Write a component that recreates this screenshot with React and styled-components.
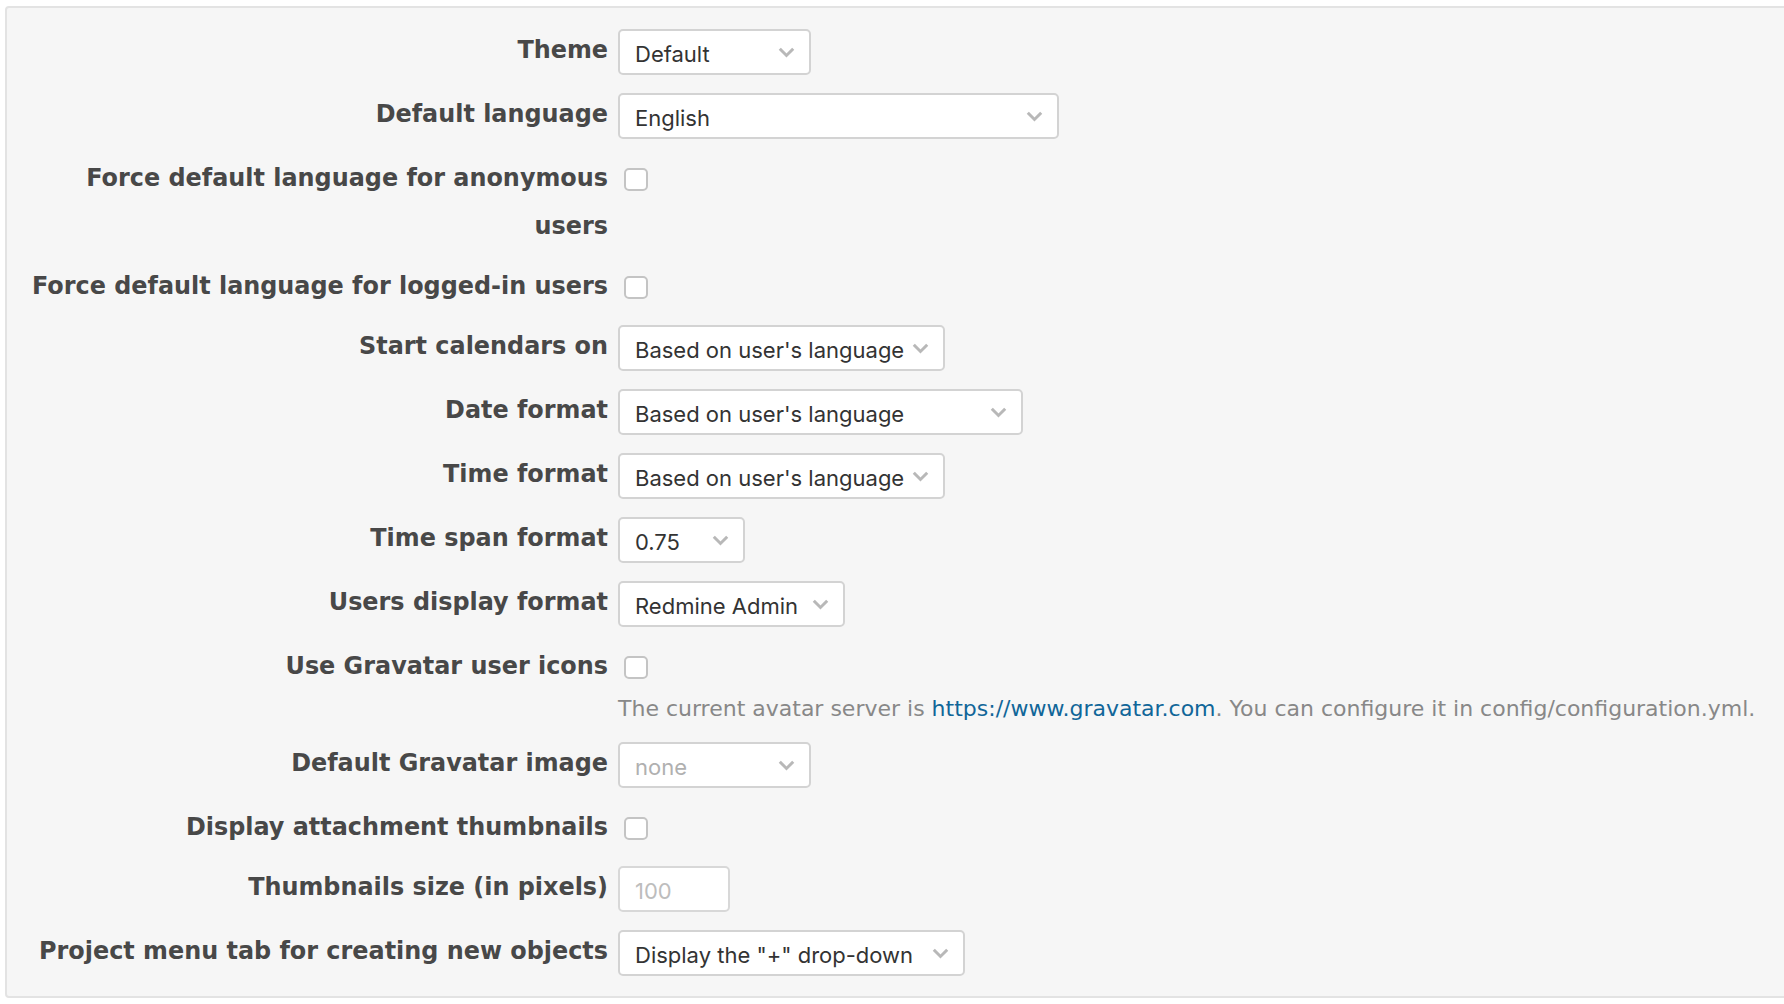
import React from 'react'
import styled, { createGlobalStyle } from 'styled-components'

const GlobalStyle = createGlobalStyle`
  html, body {
    margin: 0;
    padding: 0;
    background: #fff;
  }
  * { box-sizing: border-box; }
`

const Page = styled.div`
  padding: 6px 0 0 5px;
  overflow: hidden;
  min-height: 100vh;
`

const Panel = styled.div`
  background: #f6f6f6;
  border: 2px solid #e3e3e3;
  border-radius: 4px;
  margin-right: -12px;
  padding: 21px 0 20px 9px;
  display: flex;
  flex-direction: column;
  gap: 18px;
`

const Row = styled.div`
  display: grid;
  grid-template-columns: 592px auto;
  column-gap: 10px;
  align-items: start;
  justify-content: start;
`

const Label = styled.label`
  margin: -3px 0 -3px;
  line-height: 48px;
  text-align: right;
  font-family: "DejaVu Sans", Verdana, sans-serif;
  font-weight: bold;
  font-size: 23.9px;
  color: #484848;
`

const SelectBox = styled.div`
  width: ${p => p.$w}px;
  height: 46px;
  border: 2px solid #d3d3d3;
  border-radius: 5px;
  background: #fff;
  display: flex;
  align-items: center;
  justify-content: space-between;
  padding: 3px 14px 0 15px;
  font-family: Inter, "Noto Sans", sans-serif;
  font-size: 22px;
  color: ${p => (p.$disabled ? '#b0b0b0' : '#333')};
  white-space: nowrap;

  svg {
    margin-top: -3px;
  }
`

const TextInput = styled.div`
  width: ${p => p.$w}px;
  height: 46px;
  border: 2px solid #d8d8d8;
  border-radius: 5px;
  background: #fff;
  display: flex;
  align-items: center;
  padding: 3px 15px 0;
  font-family: Inter, "Noto Sans", sans-serif;
  font-size: 22px;
  color: #bdbdbd;
`

const Checkbox = styled.span`
  display: block;
  width: 24px;
  height: 23px;
  margin: 11px 0 0 6px;
  border: 2px solid #c4c4c4;
  border-radius: 5px;
  background: #fff;
`

const Hint = styled.div`
  grid-column: 2;
  margin-top: 6px;
  line-height: 31px;
  font-family: "DejaVu Sans", Verdana, sans-serif;
  font-size: 22px;
  color: #888;
  white-space: nowrap;

  a {
    color: #169;
    text-decoration: none;
  }
`

const Chevron = () => (
  <svg width="17" height="11" viewBox="0 0 17 11">
    <path d="M1.8 1.8 L8.5 8.5 L15.2 1.8" fill="none" stroke="#b8b8b8" strokeWidth="3" />
  </svg>
)

const fields = [
  { label: 'Theme', kind: 'select', value: 'Default', w: 193 },
  { label: 'Default language', kind: 'select', value: 'English', w: 441 },
  { label: 'Force default language for anonymous users', kind: 'check' },
  { label: 'Force default language for logged-in users', kind: 'check' },
  { label: 'Start calendars on', kind: 'select', value: "Based on user's language", w: 327 },
  { label: 'Date format', kind: 'select', value: "Based on user's language", w: 405 },
  { label: 'Time format', kind: 'select', value: "Based on user's language", w: 327 },
  { label: 'Time span format', kind: 'select', value: '0.75', w: 127 },
  { label: 'Users display format', kind: 'select', value: 'Redmine Admin', w: 227 },
  { label: 'Use Gravatar user icons', kind: 'check', hint: true },
  { label: 'Default Gravatar image', kind: 'select', value: 'none', w: 193, disabled: true },
  { label: 'Display attachment thumbnails', kind: 'check' },
  { label: 'Thumbnails size (in pixels)', kind: 'input', value: '100', w: 112 },
  { label: 'Project menu tab for creating new objects', kind: 'select', value: 'Display the "+" drop-down', w: 347 },
]

function Control({ f }) {
  if (f.kind === 'check') return <Checkbox />
  if (f.kind === 'input') return <TextInput $w={f.w}>{f.value}</TextInput>
  return (
    <SelectBox $w={f.w} $disabled={f.disabled}>
      <span>{f.value}</span>
      <Chevron />
    </SelectBox>
  )
}

export default function App() {
  return (
    <>
      <GlobalStyle />
      <Page>
        <Panel>
          {fields.map(f => (
            <Row key={f.label}>
              <Label>{f.label}</Label>
              <Control f={f} />
              {f.hint && (
                <Hint>
                  The current avatar server is <a href="#">https://www.gravatar.com</a>. You can configure it in config/configuration.yml.
                </Hint>
              )}
            </Row>
          ))}
        </Panel>
      </Page>
    </>
  )
}
